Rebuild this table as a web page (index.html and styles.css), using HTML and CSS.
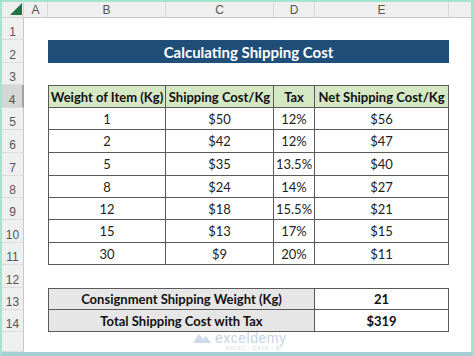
FILE: index.html
```html
<!DOCTYPE html>
<html>
<head>
<meta charset="utf-8">
<link rel="stylesheet" href="styles.css">
</head>
<body>
<div class="frame">
  <div class="sheet">
    <div class="corner"><svg width="12" height="12" viewBox="0 0 12 12"><polygon points="12,0 12,12 0,12" fill="#217346"/></svg></div>
    <div class="colh">A</div>
    <div class="colh">B</div>
    <div class="colh">C</div>
    <div class="colh">D</div>
    <div class="colh">E</div>
    <div class="colh last"></div>

    <div class="rowh">1</div>
    <div class="blank span6"></div>

    <div class="rowh">2</div>
    <div class="blank"></div>
    <div class="title">Calculating Shipping Cost</div>
    <div class="blank"></div>

    <div class="rowh">3</div>
    <div class="blank span6"></div>

    <div class="rowh sel">4</div>
    <div class="blank"></div>
    <div class="th first">Weight of Item (Kg)</div>
    <div class="th">Shipping Cost/Kg</div>
    <div class="th">Tax</div>
    <div class="th">Net Shipping Cost/Kg</div>
    <div class="blank"></div>

    <div class="rowh">5</div><div class="blank"></div>
    <div class="td first">1</div><div class="td">$50</div><div class="td">12%</div><div class="td">$56</div><div class="blank"></div>

    <div class="rowh">6</div><div class="blank"></div>
    <div class="td first">2</div><div class="td">$42</div><div class="td">12%</div><div class="td">$47</div><div class="blank"></div>

    <div class="rowh">7</div><div class="blank"></div>
    <div class="td first">5</div><div class="td">$35</div><div class="td">13.5%</div><div class="td">$40</div><div class="blank"></div>

    <div class="rowh">8</div><div class="blank"></div>
    <div class="td first">8</div><div class="td">$24</div><div class="td">14%</div><div class="td">$27</div><div class="blank"></div>

    <div class="rowh">9</div><div class="blank"></div>
    <div class="td first">12</div><div class="td">$18</div><div class="td">15.5%</div><div class="td">$21</div><div class="blank"></div>

    <div class="rowh">10</div><div class="blank"></div>
    <div class="td first">15</div><div class="td">$13</div><div class="td">17%</div><div class="td">$15</div><div class="blank"></div>

    <div class="rowh">11</div><div class="blank"></div>
    <div class="td first">30</div><div class="td">$9</div><div class="td">20%</div><div class="td">$11</div><div class="blank"></div>

    <div class="rowh">12</div>
    <div class="blank span6"></div>

    <div class="rowh">13</div><div class="blank"></div>
    <div class="lbl top">Consignment Shipping Weight (Kg)</div>
    <div class="val top">21</div>
    <div class="blank"></div>

    <div class="rowh">14</div><div class="blank"></div>
    <div class="lbl">Total Shipping Cost with Tax</div>
    <div class="val">$319</div>
    <div class="blank"></div>

    <div class="rowh"></div>
    <div class="blank span6"></div>
  </div>
  <div class="mark">
    <svg width="20" height="12" viewBox="0 0 20 12"><path d="M1 11 L7 2 L11 7 L14 4 L19 11 Z" fill="#9fb4d4"/></svg>
    <span class="mark-name">exceldemy</span>
    <span class="mark-sub">EXCEL · DATA · BI</span>
  </div>
</div>
</body>
</html>
```

FILE: styles.css
```css
* { box-sizing: border-box; }
html, body { margin: 0; padding: 0; }
body {
  width: 474px;
  height: 356px;
  overflow: hidden;
  background: #fff;
  font-family: "Lato", "Open Sans", sans-serif;
}
.frame {
  position: relative;
  width: 474px;
  height: 356px;
  border-top: 2px solid #a3e4cd;
  border-left: 2px solid #a3e4cd;
  border-right: 3px solid #a3e4cd;
  border-bottom: 4px solid #a7cfd6;
  overflow: hidden;
}
.sheet {
  display: grid;
  grid-template-columns: 22px 24px 118px 108px 41px 134px 22px;
  grid-template-rows: 16px 22px 23px 22px 23px 22px 23px 23px 22px 22px 23px 22px 23px 22px 22px 20px;
  background: #fff;
}
.corner {
  background: #efefef;
  border-right: 1px solid #d4d4d4;
  border-bottom: 1px solid #d4d4d4;
  display: flex;
  align-items: flex-end;
  justify-content: flex-end;
  padding: 0 1px 2px 0;
}
.colh {
  background: #efefef;
  border-right: 1px solid #d9d9d9;
  border-bottom: 1px solid #c8c8c8;
  color: #555;
  font-family: "Liberation Sans", Arial, sans-serif;
  font-size: 12px;
  display: flex;
  align-items: center;
  justify-content: center;
}
.colh.last { border-right: none; }
.rowh {
  background: #efefef;
  border-right: 1px solid #c8c8c8;
  border-bottom: 1px solid #dcdcdc;
  color: #555;
  font-family: "Liberation Sans", Arial, sans-serif;
  font-size: 12px;
  display: flex;
  align-items: center;
  justify-content: center;
  padding-top: 7px;
}
.rowh.sel {
  background: #d6d6d6;
  border-right: 2px solid #a0a0a0;
}
.blank { background: #fff; }
.span6 { grid-column: span 6; }
.title {
  grid-column: span 4;
  background: #1f4e79;
  color: #fff;
  font-weight: 700;
  font-size: 15px;
  display: flex;
  align-items: center;
  justify-content: center;
}
.th, .td, .lbl, .val {
  display: flex;
  align-items: center;
  justify-content: center;
  border-right: 1px solid #5a5a5a;
  border-bottom: 1px solid #5a5a5a;
  color: #111;
  font-size: 13px;
}
.first { border-left: 1px solid #5a5a5a; }
.th {
  background: #d5e8c4;
  font-weight: 700;
  border-top: 1px solid #5a5a5a;
  white-space: nowrap;
}
.td { background: #fff; color: #222; }
.lbl {
  grid-column: span 3;
  background: #e7e6e6;
  font-weight: 700;
  border-left: 1px solid #5a5a5a;
}
.val {
  background: #fff;
  font-weight: 700;
}
.top { border-top: 1px solid #5a5a5a; }
.mark {
  position: absolute;
  left: 190px;
  top: 329px;
  height: 14px;
  display: flex;
  align-items: center;
  gap: 3px;
  opacity: 0.5;
}
.mark-name {
  font-family: "Liberation Sans", Arial, sans-serif;
  font-size: 14px;
  line-height: 14px;
  color: #8fa7c9;
  letter-spacing: 0.5px;
}
.mark-sub {
  position: absolute;
  left: 34px;
  top: 15px;
  font-size: 5px;
  line-height: 5px;
  color: #a8b8cc;
  letter-spacing: 1px;
  white-space: nowrap;
}
```
